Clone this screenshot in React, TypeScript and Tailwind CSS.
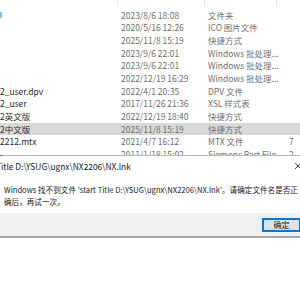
import React from "react";

type Row = { name?: string; icon?: boolean; date: string; type: string; size?: string; selected?: boolean };

const rows: Row[] = [
  { icon: true, date: "2023/8/6 18:08", type: "文件夹" },
  { date: "2020/5/16 12:26", type: "ICO 图片文件" },
  { date: "2025/11/8 15:19", type: "快捷方式" },
  { date: "2023/9/6 22:01", type: "Windows 批处理..." },
  { date: "2023/9/6 22:01", type: "Windows 批处理..." },
  { date: "2022/12/19 16:29", type: "Windows 批处理..." },
  { name: "2_user.dpv", date: "2022/4/1 20:35", type: "DPV 文件" },
  { name: "2_user", date: "2017/11/26 21:36", type: "XSL 样式表" },
  { name: "2英文版", date: "2022/12/19 18:40", type: "快捷方式" },
  { name: "2中文版", date: "2025/11/8 15:19", type: "快捷方式", selected: true },
  { name: "2212.mtx", date: "2021/4/7 16:12", type: "MTX 文件", size: "7" },
  { date: "2011/1/18 15:02", type: "Siemens Part File", size: "2" },
];

function FileRow({ row }: { row: Row }) {
  return (
    <div
      className={
        "flex items-center h-[12.7px] whitespace-nowrap text-[8.5px] leading-[12.7px] " +
        (row.selected ? "bg-[#d9d9d9]" : "")
      }
    >
      <div className="w-[121px] shrink-0 text-[#2a2a2a]">
        {row.icon ? <span className="block w-[2px] h-[6px] bg-[#7cc3f0]" /> : row.name}
      </div>
      <div className="w-[87px] shrink-0 text-[#707070]">{row.date}</div>
      <div className="w-[81px] shrink-0 text-[#707070]">{row.type}</div>
      <div className="shrink-0 text-[#707070]">{row.size}</div>
    </div>
  );
}

export default function App() {
  return (
    <div className="relative w-[300px] h-[300px] overflow-hidden bg-white font-['Noto_Sans_CJK_SC','Noto_Sans',sans-serif]">
      {/* column header edge */}
      <div className="flex h-[8.6px]">
        <div className="w-[118px] border-r border-[#e5e5e5] h-[6px]" />
        <div className="w-[87px] border-r border-[#e5e5e5] h-[6px]" />
        <div className="w-[72px] border-r border-[#e5e5e5] h-[6px]" />
      </div>

      <div>
        {rows.map((r, i) => (
          <FileRow key={i} row={r} />
        ))}
      </div>

      {/* error dialog */}
      <div className="absolute left-0 right-0 top-[155px] flex flex-col bg-white border-t border-[#b9b9b9]">
        <span className="absolute -top-[1px] left-0 w-[2px] h-[1px] bg-[#1e7fd6]" />
        <div className="flex items-center h-[20px] text-[8.4px] text-[#1a1a1a] whitespace-nowrap">
          <span className="-ml-[4px]">Title D:\YSUG\ugnx\NX2206\NX.lnk</span>
          <svg className="ml-auto -mr-[2px]" width="8" height="8" viewBox="0 0 8 8">
            <path d="M1 1 L7 7 M7 1 L1 7" stroke="#333" strokeWidth="0.9" fill="none" />
          </svg>
        </div>
        <div className="pl-[4px] pt-[8px] h-[37px] text-[7.6px] leading-[12px] text-[#1a1a1a] whitespace-nowrap">
          Windows 找不到文件 'start Title D:\YSUG\ugnx\NX2206\NX.lnk'。请确定文件名是否正
          <br />
          确后，再试一次。
        </div>
        <div className="flex items-center h-[25px] bg-[#f0f0f0] border-b-2 border-[#a9a9a9]">
          <button className="ml-[262px] w-[39px] h-[14px] shrink-0 border-2 border-[#0078d7] bg-[#e1e1e1] text-[8px] leading-none text-[#1a1a1a]">
            确定
          </button>
        </div>
      </div>
    </div>
  );
}
